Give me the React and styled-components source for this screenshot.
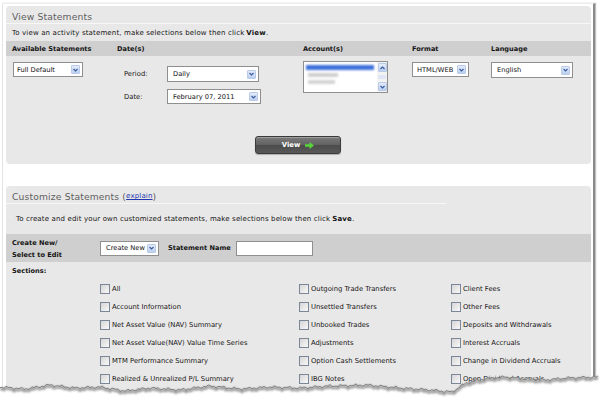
import React from "react";
import styled, { createGlobalStyle } from "styled-components";

const Global = createGlobalStyle`
  html, body { margin: 0; padding: 0; background: #fff; }
  body { font-family: "DejaVu Sans", Verdana, sans-serif; color: #161616; }
  * { box-sizing: border-box; }
`;

const Root = styled.div`
  position: relative;
  width: 599px;
  height: 401px;
  overflow: hidden;
  background: #fff;
`;

const Page = styled.div`
  margin: 3px 0 0 2px;
  width: 593px;
  height: 398px;
  border-left: 1px solid #e4e4e4;
  border-top: 1px solid #ededed;
  border-right: 2px solid #8a8a8a;
  box-shadow: 1px 0 1px rgba(0, 0, 0, 0.25);
  padding: 2px 0 0 3px;
`;

const Panel = styled.section`
  width: 585px;
  background: #e9e8e8;
  border-radius: 4px;
  margin-top: ${(p) => p.$mt || 0}px;
  overflow: hidden;
`;

const PanelTitle = styled.div`
  height: 18px;
  width: ${(p) => (p.$lineWidth ? `${p.$lineWidth}px` : "100%")};
  display: flex;
  align-items: center;
  padding: 3px 0 0 6px;
  font-size: 9.2px;
  color: #606060;
  letter-spacing: 0.15px;
  border-bottom: 1px solid #f7f7f7;
`;

const Link = styled.a`
  font-size: 7px;
  color: #2236b0;
  text-decoration: underline;
`;

const Intro = styled.div`
  height: ${(p) => p.$h}px;
  display: flex;
  align-items: center;
  padding-left: ${(p) => p.$pl}px;
  font-size: 7px;
  letter-spacing: 0.15px;
  color: #141414;
  white-space: nowrap;
  b { font-weight: bold; margin-left: 2px; }
`;

const Cols = styled.div`
  display: grid;
  grid-template-columns: 105px 186px 109px 79px 1fr;
  padding-left: 6px;
`;

const HeaderBar = styled(Cols)`
  height: 15px;
  background: #cfcfcf;
  align-items: center;
  font-size: 6.6px;
  font-weight: bold;
  color: #151515;
`;

const FormRow = styled(Cols)`
  align-items: start;
`;

const Cell = styled.div`
  padding-top: ${(p) => p.$pt || 0}px;
  padding-left: ${(p) => p.$pl || 0}px;
`;

const DatesGrid = styled.div`
  display: grid;
  grid-template-columns: 43px auto;
  row-gap: 7px;
  align-items: center;
  padding: 10px 0 0 7px;
  font-size: 6.8px;
`;

const SelectBox = styled.div`
  width: ${(p) => p.$w}px;
  height: ${(p) => p.$h}px;
  background: #fff;
  border: 1px solid #8f8f8f;
  display: flex;
  align-items: center;
  justify-content: space-between;
  padding: 0 2px 0 ${(p) => p.$pl ?? 5}px;
  font-size: 6.7px;
  font-weight: normal;
  color: #111;
  white-space: nowrap;
  overflow: hidden;
`;

const ArrowBtn = styled.div`
  flex: none;
  width: 9px;
  height: 9px;
  display: flex;
  align-items: center;
  justify-content: center;
  background: linear-gradient(#e4ecfa, #bccff0);
  border: 1px solid #b9cbe9;
  border-radius: 1px;
`;

const Chevron = ({ up }) => (
  <svg width="5" height="4" viewBox="0 0 5 4">
    <polyline
      points={up ? "0.5,3 2.5,1 4.5,3" : "0.5,1 2.5,3 4.5,1"}
      fill="none"
      stroke="#3b5c9c"
      strokeWidth="1.2"
    />
  </svg>
);

const Select = ({ w, h, pl, children }) => (
  <SelectBox $w={w} $h={h} $pl={pl}>
    <span>{children}</span>
    <ArrowBtn>
      <Chevron />
    </ArrowBtn>
  </SelectBox>
);

const ListBox = styled.div`
  margin-top: 5px;
  width: 85px;
  height: 32px;
  background: #fff;
  border: 1px solid #8f8f8f;
  display: flex;
`;

const ListItems = styled.div`
  flex: 1;
  display: flex;
  flex-direction: column;
  gap: 3px;
  padding: 3px 2px;
`;

const BlurBar = styled.div`
  height: ${(p) => p.$h}px;
  width: ${(p) => p.$w}px;
  background: ${(p) => p.$c};
  filter: blur(0.9px);
  margin-left: ${(p) => p.$ml || 0}px;
`;

const ScrollTrack = styled.div`
  width: 10px;
  display: flex;
  flex-direction: column;
  justify-content: space-between;
  align-items: center;
  background: #f3f3f3;
  padding: 1px 0;
`;

const ScrollBtn = styled(ArrowBtn)`
  width: 9px;
  height: 9px;
`;

const ScrollThumb = styled.div`
  width: 8px;
  height: 4px;
  background: #dfe7f4;
  border-radius: 1px;
`;

const ButtonRow = styled.div`
  display: flex;
  justify-content: center;
  padding: 32px 0 10px;
`;

const ViewButton = styled.button`
  width: 86px;
  height: 18px;
  margin-left: -1px;
  border: 1px solid #3a3a3a;
  border-radius: 3px;
  background: linear-gradient(#7b7b7b, #626262 48%, #4c4c4c 52%, #585858);
  box-shadow: inset 0 1px 0 rgba(255, 255, 255, 0.28), 0 1px 1px rgba(0, 0, 0, 0.25);
  color: #fff;
  font-family: "DejaVu Sans", Verdana, sans-serif;
  font-size: 6.8px;
  font-weight: bold;
  display: flex;
  align-items: center;
  justify-content: center;
  gap: 5px;
  padding: 0;
`;

const GreenArrow = () => (
  <svg width="9" height="7" viewBox="0 0 9 7">
    <path d="M0 2.2h4.5V0L9 3.5 4.5 7V4.8H0z" fill="#59d43a" />
  </svg>
);

const EditBar = styled.div`
  height: 28px;
  background: #cfcfcf;
  display: flex;
  align-items: center;
  padding-left: 6px;
  font-size: 6.6px;
  font-weight: bold;
  color: #151515;
`;

const EditLabel = styled.div`
  width: 88px;
  line-height: 12px;
  padding-top: 1px;
`;

const NameLabel = styled.div`
  width: 77px;
  padding-left: 9px;
`;

const TextInput = styled.div`
  width: 77px;
  height: 15px;
  background: #fff;
  border: 1px solid #8f8f8f;
`;

const SectionsLabel = styled.div`
  height: 18px;
  display: flex;
  align-items: center;
  padding-left: 6px;
  font-size: 6.6px;
  font-weight: bold;
`;

const CheckGrid = styled.div`
  display: grid;
  grid-template-columns: 199px 152px 1fr;
  grid-auto-flow: column;
  grid-template-rows: repeat(7, 18px);
  padding-left: 94px;
`;

const CheckItem = styled.label`
  display: flex;
  align-items: center;
  font-size: 6.8px;
  color: #161616;
  white-space: nowrap;
`;

const CheckBox = styled.span`
  flex: none;
  width: 10px;
  height: 10px;
  margin-right: 2px;
  border: 1px solid #7b8696;
  background: linear-gradient(135deg, #d6d6d6, #f8f8f8);
`;

const TearOverlay = styled.svg`
  position: absolute;
  left: 0;
  top: 0;
  pointer-events: none;
`;

const col1 = [
  "All",
  "Account Information",
  "Net Asset Value (NAV) Summary",
  "Net Asset Value(NAV) Value Time Series",
  "MTM Performance Summary",
  "Realized & Unrealized P/L Summary",
  "Cash Report",
];
const col2 = [
  "Outgoing Trade Transfers",
  "Unsettled Transfers",
  "Unbooked Trades",
  "Adjustments",
  "Option Cash Settlements",
  "IBG Notes",
  "Trades",
];
const col3 = [
  "Client Fees",
  "Other Fees",
  "Deposits and Withdrawals",
  "Interest Accruals",
  "Change in Dividend Accruals",
  "Open Dividend Accruals",
  "Dividends",
];

const ctrl = [
  [0, 387], [25, 389], [50, 385], [75, 388], [100, 387], [125, 391], [150, 388],
  [180, 390], [210, 386], [240, 389], [270, 387], [300, 388], [330, 386], [367, 385],
  [400, 388], [430, 390], [452, 392], [466, 383], [485, 379], [505, 377], [525, 379],
  [545, 380], [567, 378], [599, 377],
];

function edgePoints() {
  const pts = [];
  for (let x = 0; x <= 599; x += 2) {
    let i = 0;
    while (i < ctrl.length - 2 && ctrl[i + 1][0] < x) i++;
    const [x0, y0] = ctrl[i];
    const [x1, y1] = ctrl[i + 1];
    const t = Math.min(1, Math.max(0, (x - x0) / (x1 - x0)));
    const y = y0 + (y1 - y0) * t + 0.9 * Math.sin(x * 1.9) + 0.7 * Math.sin(x * 0.47 + 1);
    pts.push([x, y]);
  }
  return pts;
}

const Tear = () => {
  const pts = edgePoints();
  const line = pts.map(([x, y]) => `${x},${y.toFixed(1)}`).join(" ");
  const shadow = pts.map(([x, y]) => `${x},${(y + 1.6).toFixed(1)}`).join(" ");
  const poly = `${line} 599,401 0,401`;
  return (
    <TearOverlay width="599" height="401" viewBox="0 0 599 401">
      <defs>
        <filter id="tb" x="-5%" y="-50%" width="110%" height="200%">
          <feGaussianBlur stdDeviation="1.1" />
        </filter>
      </defs>
      <polygon points={poly} fill="#fff" />
      <polyline points={shadow} fill="none" stroke="#8a8a8a" strokeWidth="2.2" filter="url(#tb)" />
      <polyline points={line} fill="none" stroke="#7a7a7a" strokeWidth="0.9" />
    </TearOverlay>
  );
};

export default function App() {
  return (
    <Root>
      <Global />
      <Page>
        <Panel>
          <PanelTitle>View Statements</PanelTitle>
          <Intro $h={17} $pl={6}>
            To view an activity statement, make selections below then click <b>View</b>.
          </Intro>
          <HeaderBar>
            <span>Available Statements</span>
            <span>Date(s)</span>
            <span>Account(s)</span>
            <span>Format</span>
            <span>Language</span>
          </HeaderBar>
          <FormRow>
            <Cell $pt={6} $pl={1}>
              <Select w={70} h={15} pl={3}>Full Default</Select>
            </Cell>
            <DatesGrid>
              <span>Period:</span>
              <Select w={92} h={16}>Daily</Select>
              <span>Date:</span>
              <Select w={94} h={15}>February 07, 2011</Select>
            </DatesGrid>
            <Cell>
              <ListBox>
                <ListItems>
                  <BlurBar $h={5} $w={68} $c="#3d70da" />
                  <BlurBar $h={4} $w={30} $c="#cfcfcf" $ml={2} />
                  <BlurBar $h={4} $w={27} $c="#d4d4d4" $ml={2} />
                </ListItems>
                <ScrollTrack>
                  <ScrollBtn>
                    <Chevron up />
                  </ScrollBtn>
                  <ScrollThumb />
                  <ScrollBtn>
                    <Chevron />
                  </ScrollBtn>
                </ScrollTrack>
              </ListBox>
            </Cell>
            <Cell $pt={6}>
              <Select w={57} h={15} pl={4}>HTML/WEB</Select>
            </Cell>
            <Cell $pt={6}>
              <Select w={82} h={16}>English</Select>
            </Cell>
          </FormRow>
          <ButtonRow>
            <ViewButton>
              View <GreenArrow />
            </ViewButton>
          </ButtonRow>
        </Panel>

        <Panel $mt={22}>
          <PanelTitle $lineWidth={440}>
            Customize Statements&nbsp;(<Link>explain</Link>)
          </PanelTitle>
          <Intro $h={30} $pl={10}>
            To create and edit your own customized statements, make selections below then click <b>Save</b>.
          </Intro>
          <EditBar>
            <EditLabel>
              Create New/
              <br />
              Select to Edit
            </EditLabel>
            <Select w={59} h={15}>Create New</Select>
            <NameLabel>Statement Name</NameLabel>
            <TextInput />
          </EditBar>
          <SectionsLabel>Sections:</SectionsLabel>
          <CheckGrid>
            {[...col1, ...col2, ...col3].map((t, i) => (
              <CheckItem key={i}>
                <CheckBox />
                {t}
              </CheckItem>
            ))}
          </CheckGrid>
        </Panel>
      </Page>
      <Tear />
    </Root>
  );
}
